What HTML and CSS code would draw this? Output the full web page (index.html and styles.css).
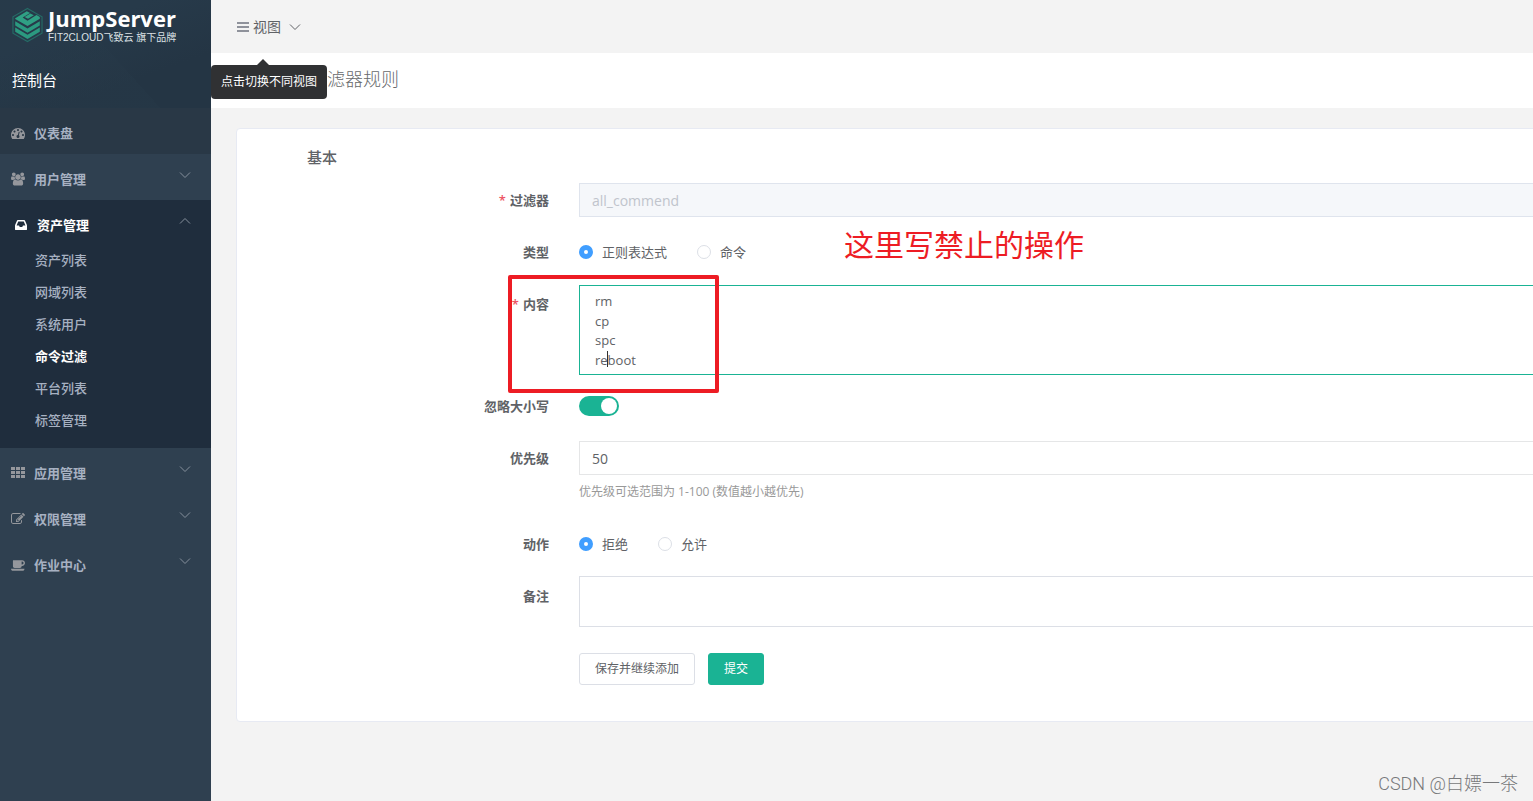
FILE: index.html
```html
<!DOCTYPE html>
<html lang="zh-CN">
<head>
<meta charset="utf-8">
<title>JumpServer</title>
<link rel="stylesheet" href="styles.css">
</head>
<body>
<svg class="defs" aria-hidden="true">
  <symbol id="down" viewBox="0 0 12 12"><path d="M1 3.500 6 8.500 11 3.500" fill="none" stroke="currentColor"/></symbol>
  <symbol id="up" viewBox="0 0 12 12"><path d="M1 8.500 6 3.500 11 8.500" fill="none" stroke="currentColor"/></symbol>
</svg>
<div class="app">
  <aside class="sidebar">
    <div class="brand">
      <a class="logo" href="#">
        <svg class="logo-mark" viewBox="0 0 32 36" aria-hidden="true">
          <path d="M16 1 31 9.500V26.500L16 35 1 26.500V9.500Z" fill="none" stroke="#256b66" stroke-width="1.200"/>
          <path d="M3.300 11 15.300 3.700 18.700 5.700 11 10.300 16 13.500 25.300 7.700 28.700 9.700V11.500L16 19 3.300 11.800Z" fill="#2fa084"/>
          <path d="M19 6 22.500 8 16.500 11.500 13 9.800Z" fill="#2fa084"/>
          <path d="M3.300 14 16 21.500 28.700 14V18.500L16 26 3.300 18.500Z" fill="#2b9a80"/>
          <path d="M3.300 20.500 16 28 28.700 20.500V25L16 32.500 3.300 25Z" fill="#2b9a80"/>
        </svg>
        <span class="logo-text"><b class="logo-name">JumpServer</b><span class="logo-sub">FIT2CLOUD飞致云 旗下品牌</span></span>
      </a>
      <div class="console">控制台</div>
    </div>
    <nav class="menu">
      <a class="item current" href="#">
        <svg class="icon" viewBox="0 0 1792 1792"><path d="M384 1152q0-53-37.500-90.500t-90.500-37.500-90.500 37.500-37.500 90.500 37.500 90.500 90.500 37.500 90.500-37.500 37.500-90.500zm192-448q0-53-37.500-90.500t-90.500-37.500-90.500 37.500-37.500 90.500 37.500 90.500 90.500 37.500 90.500-37.500 37.500-90.500zm428 481l101-382q6-26-7.500-48.500t-38.500-29.500-48 6.500-30 39.500l-101 382q-60 5-107 43.500t-63 98.500q-20 77 20 146t117 89 146-20 89-117q16-60-6-117t-72-91zm660-33q0-53-37.500-90.500t-90.500-37.500-90.500 37.500-37.500 90.500 37.500 90.500 90.500 37.500 90.500-37.500 37.500-90.500zm-640-640q0-53-37.500-90.500t-90.500-37.500-90.500 37.500-37.500 90.500 37.500 90.500 90.500 37.500 90.500-37.500 37.500-90.500zm448 192q0-53-37.500-90.500t-90.500-37.500-90.500 37.500-37.500 90.500 37.500 90.500 90.500 37.500 90.500-37.500 37.500-90.500zm320 448q0 261-141 483-19 29-54 29h-1402q-35 0-54-29-141-221-141-483 0-182 71-348t191-286 286-191 348-71 348 71 286 191 191 286 71 348z"/></svg>
        <span>仪表盘</span>
      </a>
      <a class="item" href="#">
        <svg class="icon" viewBox="0 0 1920 1792"><path d="M593 896q-162 5-265 128h-134q-82 0-138-40.500t-56-118.500q0-353 124-353 6 0 43.500 21t97.500 42.500 119 21.500q67 0 133-23-5 37-5 66 0 139 81 256zm1071 637q0 120-73 189.500t-194 69.500h-874q-121 0-194-69.500t-73-189.500q0-53 3.500-103.500t14-109 26.500-108.500 43-97.500 62-81 85.500-53.500 111.500-20q10 0 43 21.500t73 48 107 48 135 21.500 135-21.500 107-48 73-48 43-21.500q61 0 111.500 20t85.500 53.500 62 81 43 97.500 26.500 108.500 14 109 3.500 103.500zm-1024-1277q0 106-75 181t-181 75-181-75-75-181 75-181 181-75 181 75 75 181zm704 384q0 159-112.500 271.500t-271.500 112.500-271.500-112.500-112.500-271.500 112.500-271.500 271.500-112.500 271.500 112.500 112.500 271.500zm576 225q0 78-56 118.500t-138 40.500h-134q-103-123-265-128 81-117 81-256 0-29-5-66 66 23 133 23 59 0 119-21.500t97.500-42.500 43.500-21q124 0 124 353zm-128-609q0 106-75 181t-181 75-181-75-75-181 75-181 181-75 181 75 75 181z"/></svg>
        <span>用户管理</span><svg class="arrow"><use href="#down"/></svg>
      </a>
      <div class="group">
        <a class="item open" href="#">
          <svg class="icon" viewBox="0 0 1664 1792"><path d="M1087 960h316q-1-3-2.500-8t-2.500-8l-212-496h-708l-212 496q-1 2-2.500 8t-2.500 8h316l95 192h320zm513 30v482q0 26-19 45t-45 19h-1408q-26 0-45-19t-19-45v-482q0-62 25-123l238-552q10-25 36.500-42t52.500-17h832q26 0 52.500 17t36.500 42l238 552q25 61 25 123z"/></svg>
          <span>资产管理</span><svg class="arrow"><use href="#up"/></svg>
        </a>
        <div class="submenu">
          <a href="#">资产列表</a>
          <a href="#">网域列表</a>
          <a href="#">系统用户</a>
          <a class="active" href="#">命令过滤</a>
          <a href="#">平台列表</a>
          <a href="#">标签管理</a>
        </div>
      </div>
      <a class="item" href="#">
        <svg class="icon" viewBox="0 0 14 14"><path d="M0 1h4v3H0zM5 1h4v3H5zM10 1h4v3h-4zM0 5h4v3H0zM5 5h4v3H5zM10 5h4v3h-4zM0 9h4v3H0zM5 9h4v3H5zM10 9h4v3h-4z"/></svg>
        <span>应用管理</span><svg class="arrow"><use href="#down"/></svg>
      </a>
      <a class="item" href="#">
        <svg class="icon" viewBox="0 0 1792 1792"><path d="M888 1184l116-116-152-152-116 116v56h96v96h56zm440-720q-16-16-33 1l-350 350q-17 17-1 33t33-1l350-350q17-17 1-33zm80 594v190q0 119-84.500 203.500t-203.500 84.500h-832q-119 0-203.500-84.500t-84.500-203.500v-832q0-119 84.500-203.500t203.500-84.500h832q63 0 117 25 15 7 18 23 3 17-9 29l-49 49q-14 14-32 8-23-6-45-6h-832q-66 0-113 47t-47 113v832q0 66 47 113t113 47h832q66 0 113-47t47-113v-126q0-13 9-22l64-64q15-15 35-7t20 29zm-96-738l288 288-672 672h-288v-288zm444 132l-92 92-288-288 92-92q28-28 68-28t68 28l152 152q28 28 28 68t-28 68z"/></svg>
        <span>权限管理</span><svg class="arrow"><use href="#down"/></svg>
      </a>
      <a class="item" href="#">
        <svg class="icon" viewBox="0 0 1856 1792"><path d="M1664 640q0-80-56-136t-136-56h-64v384h64q80 0 136-56t56-136zm-1664 768h1792q0 106-75 181t-181 75h-1280q-106 0-181-75t-75-181zm1856-768q0 159-112.500 271.500t-271.500 112.500h-64v32q0 92-66 158t-158 66h-704q-92 0-158-66t-66-158v-736q0-26 19-45t45-19h1152q159 0 271.500 112.500t112.500 271.500z"/></svg>
        <span>作业中心</span><svg class="arrow"><use href="#down"/></svg>
      </a>
    </nav>
  </aside>

  <div class="page">
    <header class="topbar">
      <button class="view-switch" type="button">
        <svg class="bars" viewBox="0 0 12 12"><path d="M0 2h12M0 6h12M0 10h12" stroke="currentColor" stroke-width="2"/></svg>
        <span>视图</span>
        <svg class="view-arrow"><use href="#down"/></svg>
      </button>
      <div class="tooltip" role="tooltip">点击切换不同视图</div>
    </header>
    <h1 class="title">滤器规则</h1>
    <main class="content">
      <form class="card">
        <h2 class="section">基本</h2>
        <div class="row">
          <label class="label required" for="filter">过滤器</label>
          <input class="field" id="filter" type="text" value="all_commend" disabled>
        </div>
        <div class="row">
          <span class="label" id="type-label">类型</span>
          <div class="options" role="radiogroup" aria-labelledby="type-label">
            <label class="option"><input type="radio" name="type" checked>正则表达式</label>
            <label class="option"><input type="radio" name="type">命令</label>
          </div>
        </div>
        <div class="row">
          <label class="label required" for="body">内容</label>
          <div class="editor">
            <textarea class="area focused" id="body" spellcheck="false">rm
cp
spc
reboot</textarea>
            <i class="caret"></i>
          </div>
        </div>
        <div class="row">
          <label class="label" for="ignore">忽略大小写</label>
          <div class="options"><input class="switch" id="ignore" type="checkbox" role="switch" checked></div>
        </div>
        <div class="row">
          <label class="label" for="priority">优先级</label>
          <div class="stack">
            <input class="field" id="priority" type="text" value="50">
            <div class="help">优先级可选范围为 1-100 (数值越小越优先)</div>
          </div>
        </div>
        <div class="row">
          <span class="label" id="action-label">动作</span>
          <div class="options" role="radiogroup" aria-labelledby="action-label">
            <label class="option"><input type="radio" name="action" checked>拒绝</label>
            <label class="option"><input type="radio" name="action">允许</label>
          </div>
        </div>
        <div class="row">
          <label class="label" for="comment">备注</label>
          <textarea class="area comment" id="comment"></textarea>
        </div>
        <div class="row actions">
          <span class="label"></span>
          <div class="buttons">
            <button class="btn" type="button">保存并继续添加</button>
            <button class="btn primary" type="submit">提交</button>
          </div>
        </div>
      </form>
    </main>
    <div class="mark-box"></div>
    <div class="mark-text">这里写禁止的操作</div>
    <div class="watermark">CSDN @白嫖一茶</div>
  </div>
</div>
</body>
</html>
```
FILE: styles.css
```css
* { box-sizing: border-box; }
body {
  margin: 0;
  font: 13px/20px "Open Sans", "Noto Sans CJK SC", sans-serif;
  color: #606266;
  background: #f3f3f3;
}
a { color: inherit; text-decoration: none; }
button, input, textarea { font: inherit; color: inherit; margin: 0; }
.defs { position: absolute; width: 0; height: 0; }
.app { display: flex; min-height: 100vh; overflow: hidden; }

/* Sidebar */
.sidebar { flex: 0 0 211px; background: #2f4050; color: #a7b1c2; }
.brand {
  height: 108px;
  padding: 7px 12px 0;
  background:
    linear-gradient(48deg, #273a4955 52%, transparent 52%),
    linear-gradient(160deg, #273a4a 30%, #243544 70%);
}
.logo { display: flex; gap: 5px; color: #fff; }
.logo-mark { width: 31px; height: 36px; }
.logo-text { display: flex; flex-direction: column; }
.logo-name { font-size: 22px; line-height: 22px; }
.logo-sub { font: 10px/18px "Liberation Sans", "Noto Sans CJK SC", sans-serif; white-space: nowrap; color: #dce1e5; }
.console { margin-top: 15px; font-size: 15px; line-height: 36px; color: #fff; }
.item { display: flex; align-items: center; height: 46px; padding: 3px 20px 0 11px; font-weight: 600; }
.item.current { background: #293846; }
.icon { width: 14px; height: 14px; margin-right: 9px; fill: #95979c; }
.arrow { width: 12px; height: 12px; margin: 0 0 7px auto; color: #86909c; }
.group { background: #1f2d3d; padding-bottom: 12px; }
.item.open { color: #fff; padding-left: 14px; }
.open .icon { fill: #fff; }
.submenu { display: flex; flex-direction: column; padding-left: 35px; line-height: 32px; font-weight: 500; margin-top: -2px; }
.submenu .active { color: #fff; font-weight: 700; }

/* Header */
.page { flex: 1; min-width: 0; position: relative; }
.topbar { height: 53px; padding: 17px 26px 0; }
.view-switch { display: flex; align-items: center; gap: 4px; padding: 0; border: 0; background: none; font-size: 14px; line-height: 20px; }
.bars { width: 12px; height: 12px; color: #8f929b; }
.view-arrow { width: 12px; height: 12px; margin-left: 4px; }
.tooltip {
  position: absolute;
  top: 65px;
  left: 0;
  padding: 7px 10px;
  border-radius: 4px;
  background: #303133;
  color: #fff;
  font-size: 12px;
}
.tooltip::before {
  content: "";
  position: absolute;
  top: -6px;
  left: 46px;
  border: 6px solid transparent;
  border-top: 0;
  border-bottom-color: #303133;
}
.title { margin: 0; padding: 0 25px 3px 116px; background: #fff; font-size: 18px; font-weight: 300; line-height: 52px; color: #676a6c; }

/* Form */
.content { padding: 20px 0 80px 25px; }
.card {
  display: flex;
  flex-direction: column;
  gap: 18px;
  margin-right: -80px;
  padding: 18px 0 35px 70px;
  border: 1px solid #e7eaf3;
  border-radius: 4px;
  background: #fff;
}
.section { margin: 0 0 -2px; font-size: 15px; font-weight: 500; line-height: 20px; }
.row { display: flex; }
.label { flex: 0 0 242px; margin-right: 30px; line-height: 34px; height: 34px; text-align: right; font-weight: 600; }
.required::before { content: "*"; margin-right: 4px; color: #ed5565; }
.field { flex: 1; width: 100%; height: 34px; padding: 0 12px; border: 1px solid #e5e6e7; background: #fff; font-size: 14px; }
.field:disabled { background: #f5f7fa; border-color: #dfe4ed; color: #c0c4cc; }
.options { display: flex; align-items: center; gap: 30px; height: 34px; }
.option { display: flex; align-items: center; gap: 9px; }
.option input { appearance: none; width: 14px; height: 14px; border: 1px solid #dcdfe6; border-radius: 50%; background: #fff; }
.option input:checked { border: 5px solid #409eff; }
.editor { position: relative; flex: 1; margin: -2px 0 -4px; }
.area { display: block; width: 100%; resize: none; outline: 0; border: 1px solid #dcdfe6; border-radius: 0; background: #fff; padding: 6px 15px 0; line-height: 1.5; }
.focused { height: 90px; border-color: #1ab394; }
.caret { position: absolute; left: 28px; top: 66px; width: 1px; height: 16px; background: #303133; }
.switch { appearance: none; width: 40px; height: 20px; border-radius: 10px; background: #1ab394; padding: 2px; display: flex; justify-content: flex-end; }
.switch::before { content: ""; width: 16px; height: 16px; border-radius: 50%; background: #fff; }
.switch:not(:checked) { justify-content: flex-start; background: #dcdfe6; }
.stack { flex: 1; }
.help { font-size: 12px; line-height: 34px; color: #999; }
.comment { flex: 1; height: 51px; margin-top: -3px; }
.actions { padding-top: 8px; margin-bottom: -1px; }
.buttons { display: flex; align-items: flex-start; gap: 13px; }
.btn { height: 32px; padding: 0 15px; border: 1px solid #dcdfe6; border-radius: 3px; background: #fff; font-size: 12px; line-height: 30px; }
.primary { border-color: #1ab394; background: #1ab394; color: #fff; }

/* Annotations */
.mark-box { position: absolute; left: 297px; top: 275px; width: 211px; height: 118px; border: 4px solid #ed1c24; border-radius: 2px; }
.mark-text { position: absolute; left: 633px; top: 225px; font-size: 30px; line-height: 40px; color: #ed1c24; white-space: nowrap; }
.watermark { position: absolute; right: 15px; bottom: 6px; font: 300 18px/24px Roboto, "Noto Sans CJK SC", sans-serif; color: #77787a; }
```
